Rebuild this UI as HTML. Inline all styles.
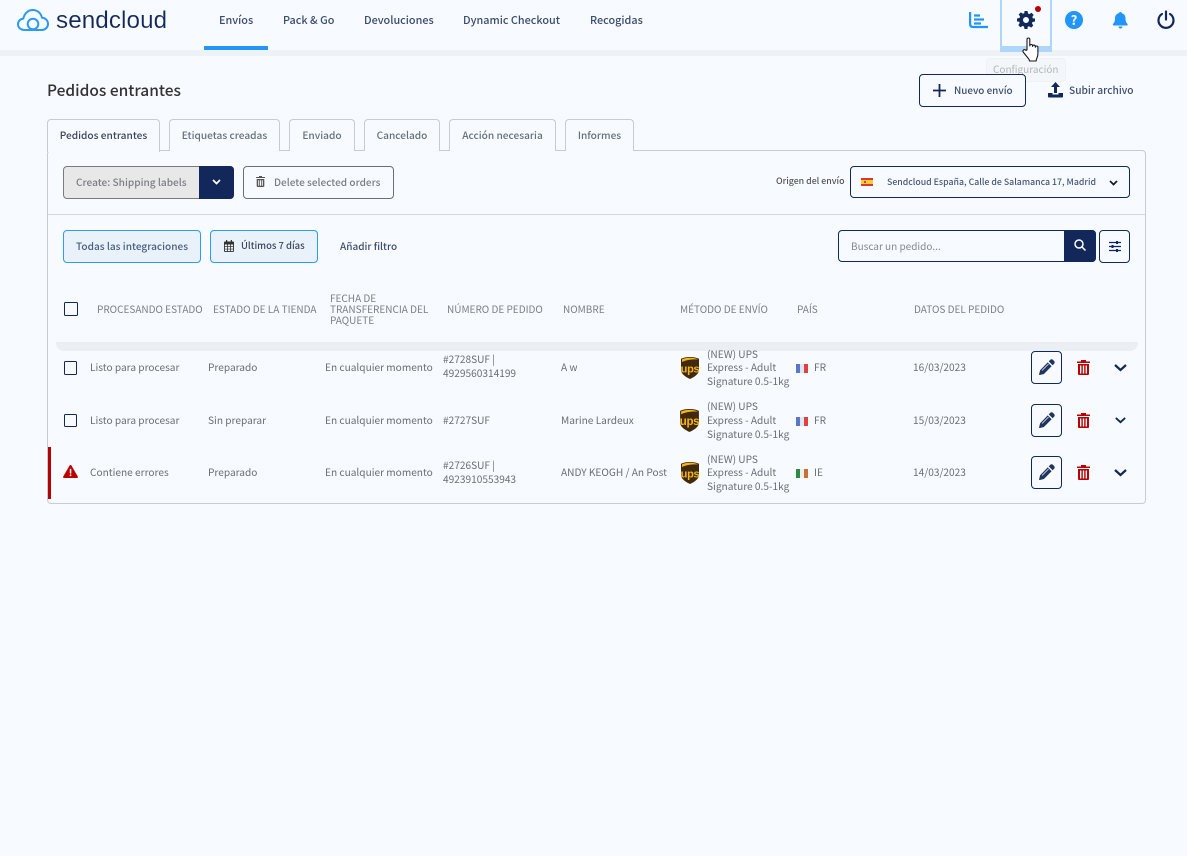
<!DOCTYPE html>
<html lang="es"><head><meta charset="utf-8"><title>Sendcloud</title>
<style>
*{box-sizing:border-box}
html,body{margin:0;padding:0;width:1187px;height:856px;overflow:hidden;background:#f7fbff;font-family:"Noto Sans CJK JP","Liberation Sans",sans-serif;color:#555}
.t{position:absolute;white-space:nowrap;line-height:14px;font-size:11px}
.b{position:absolute;border-radius:4px}
svg{position:absolute;overflow:visible}
.nav{font-size:10.85px;color:#3c4b6c;font-weight:500;top:13px}
.tab{position:absolute;top:119px;height:32px;border:1px solid #c8ccd0;border-bottom:0;border-radius:4px 4px 0 0;font-size:10.15px;font-weight:500;color:#66707c;text-align:center;line-height:30px;background:#f7fbff}
.th{font-size:10px;color:#7b7f85}
.td{font-size:10.15px;color:#6a6d72}
.cb{position:absolute;width:14px;height:14px;border:1.5px solid #12275a;border-radius:1.5px}
.ed{position:absolute;left:1031px;width:31px;height:33px;border:1px solid #12275a;border-radius:4px}
</style></head><body>

<div class="b" style="left:0;top:50px;width:1187px;height:6px;background:#edf2f7;border-radius:0"></div>

<svg style="left:17px;top:9px" width="32" height="23" viewBox="0 0 32 23" fill="none" stroke="#2b9bf4" stroke-width="2"><path d="M10 21H7.500C3.800 21 1 18.600 1 15.200c0-3 2.200-5.300 5.300-5.600C7.200 4.700 11 1 15.800 1c4.600 0 8.200 3.200 9.100 7.600 3.500.2 6.100 3 6.100 6.300 0 3.400-2.700 6.100-6.300 6.100H22"/><circle cx="16" cy="15" r="5.300"/><path d="M10 21h12"/></svg>
<div class="t" style="left:56px;top:6px;font-size:24.200px;line-height:30px;color:#12275a;font-family:'Liberation Sans',sans-serif;letter-spacing:.1px;-webkit-text-stroke:.12px #f7fbff">sendcloud</div>

<div class="t nav" style="left:219px">Envíos</div>
<div class="t nav" style="left:283px">Pack &amp; Go</div>
<div class="t nav" style="left:364px">Devoluciones</div>
<div class="t nav" style="left:463px">Dynamic Checkout</div>
<div class="t nav" style="left:590px">Recogidas</div>
<div class="b" style="left:204px;top:46px;width:64px;height:4px;background:#2196f8;border-radius:0"></div>

<svg style="left:969px;top:12px" width="19" height="16" viewBox="0 0 19 16" fill="none" stroke="#2196f8" stroke-width="2.200"><path d="M1.100 0v12c0 2 1 3 3 3H19"/><path d="M5 3.500h6M5 7.500h10M5 11.500h7"/></svg>

<div class="b" style="left:1000px;top:0;width:52px;height:52px;border:2px solid #aed6fa;border-top:0;border-radius:0"></div>
<div class="b" style="left:1002px;top:46px;width:48px;height:5px;background:#aed6fa;border-radius:0"></div>
<svg style="left:1017px;top:11px" width="18" height="18" viewBox="0 0 24 24"><path fill="#12275a" fill-rule="evenodd" d="M10 0h4l.7 3.300 1.800.8 2.900-1.800 2.800 2.800-1.800 2.900.8 1.800L24 10v4l-3.300.7-.8 1.800 1.800 2.900-2.800 2.800-2.900-1.800-1.800.8L14 24h-4l-.7-3.300-1.800-.8-2.900 1.800-2.800-2.800 1.800-2.900-.8-1.800L0 14v-4l3.300-.7.8-1.800-1.800-2.900 2.800-2.800 2.900 1.800 1.800-.8zM12 8a4 4 0 1 0 0 8 4 4 0 0 0 0-8z"/></svg>
<div class="b" style="left:1035px;top:6px;width:6px;height:6px;border-radius:50%;background:#b80000"></div>

<div class="b" style="left:1065px;top:11px;width:18px;height:18px;border-radius:50%;background:#2196f8"></div>
<div class="t" style="left:1065px;top:12px;width:18px;text-align:center;color:#fff;font-size:13px;line-height:16px;font-weight:700">?</div>

<svg style="left:1113px;top:12px" width="15" height="17" viewBox="0 0 15 17"><path fill="#2196f8" d="M7.500 0c.8 0 1.300.6 1.300 1.300 2.500.6 3.700 2.600 3.700 5 0 3.400.8 4.300 2 5.700.4.500.2 1.500-.7 1.500H.7C-.2 13.500-.4 12.500 0 12c1.200-1.400 2-2.300 2-5.700 0-2.400 1.200-4.400 3.700-5C5.700.6 6.700 0 7.500 0zM5.500 14.500h4c0 1.200-.9 2-2 2s-2-.8-2-2z"/></svg>

<svg style="left:1157px;top:10px" width="18" height="19" viewBox="0 0 18 19" fill="none" stroke="#12275a" stroke-width="2.200" stroke-linecap="round"><path d="M9 1.500v8"/><path d="M5 4A7.500 7.500 0 1 0 13 4"/></svg>

<div class="t" style="left:47px;top:79px;font-size:15.500px;line-height:22px;font-weight:500;color:#333">Pedidos entrantes</div>

<div class="b" style="left:986px;top:58px;width:80px;height:24px;background:#f4f7fa;border:1px solid #eef1f4;opacity:.9"></div>
<div class="t" style="left:993px;top:62px;font-size:10px;color:#b4b7ba">Configuración</div>

<div class="b" style="left:919px;top:74px;width:107px;height:33px;border:1px solid #12275a;background:#f7fbff"></div>
<svg style="left:933px;top:84px" width="13" height="13" viewBox="0 0 13 13" stroke="#12275a" stroke-width="1.800"><path d="M6.500 0v13M0 6.500h13"/></svg>
<div class="t" style="left:954px;top:83px;font-size:9.900px;font-weight:500;color:#3f4d6e">Nuevo envío</div>

<svg style="left:1048px;top:82px" width="15" height="17" viewBox="0 0 15 17"><path fill="#12275a" d="M7.500 0l4.500 5H9v6H6V5H3zM0 11h4.500v1.500h6V11H15v3.500c0 .6-.4 1-1 1H1c-.6 0-1-.4-1-1z"/></svg>
<div class="t" style="left:1069px;top:83px;font-size:10.200px;font-weight:500;color:#3f4d6e">Subir archivo</div>

<div class="b" style="left:47px;top:150px;width:1099px;height:354px;border:1px solid #c8ccd0;background:#f7fbff"></div>

<div class="tab" style="left:47px;width:113px;height:33px;color:#3c4458;border-color:#c8ccd0;z-index:2">Pedidos entrantes</div>
<div class="tab" style="left:169px;width:111px">Etiquetas creadas</div>
<div class="tab" style="left:289px;width:66px">Enviado</div>
<div class="tab" style="left:364px;width:76px">Cancelado</div>
<div class="tab" style="left:449px;width:107px">Acción necesaria</div>
<div class="tab" style="left:565px;width:69px">Informes</div>

<div class="b" style="left:63px;top:166px;width:171px;height:33px;background:#e8e8e9;border:1px solid #7a7a7a"></div>
<div class="b" style="left:199px;top:166px;width:35px;height:33px;background:#12275a;border-radius:0 4px 4px 0"></div>
<div class="t" style="left:76px;top:175px;font-size:10.100px;font-weight:500;color:#7a7d82">Create: Shipping labels</div>
<svg style="left:212px;top:179px" width="9" height="6" viewBox="0 0 9 6" fill="none" stroke="#fff" stroke-width="1.700"><path d="M1 1l3.500 3.500L8 1"/></svg>

<div class="b" style="left:243px;top:166px;width:151px;height:33px;border:1px solid #6e6e6e"></div>
<svg style="left:256px;top:176px" width="9" height="11" viewBox="0 0 9 11" fill="#555"><path d="M0 1h3V0h3v1h3v1H0zM.7 3h7.600v7c0 .6-.4 1-1 1H1.700c-.6 0-1-.4-1-1zM2.200 4.200v5.600h1V4.200zm1.800 0v5.600h1V4.200zm1.800 0v5.600h1V4.200z"/></svg>
<div class="t" style="left:274px;top:175px;font-size:10.050px;font-weight:500;color:#7a7d82">Delete selected orders</div>

<div class="t" style="left:776px;top:174px;font-size:8.800px;font-weight:500;color:#555">Origen del envío</div>
<div class="b" style="left:850px;top:166px;width:280px;height:32px;border:1px solid #12275a"></div>
<svg style="left:861px;top:178px" width="12" height="8" viewBox="0 0 12 8"><rect width="12" height="8" fill="#d9363a"/><rect y="2" width="12" height="4" fill="#f6cd2e"/><rect x="3" y="3" width="2" height="2" fill="#c4464a"/></svg>
<div class="t" style="left:887px;top:175px;font-size:8.750px;font-weight:500;color:#4a5878">Sendcloud España, Calle de Salamanca 17, Madrid</div>
<svg style="left:1109px;top:180px" width="9" height="6" viewBox="0 0 9 6" fill="none" stroke="#1a1a1a" stroke-width="1.700"><path d="M1 1l3.500 3.500L8 1"/></svg>

<div class="b" style="left:48px;top:214px;width:1097px;height:1px;background:#d4d8dc;border-radius:0"></div>

<div class="b" style="left:63px;top:230px;width:138px;height:33px;border:1px solid #2b9bf4;background:#e9f2fa"></div>
<div class="t" style="left:76px;top:239px;font-size:10.100px;font-weight:500;color:#4a5d80">Todas las integraciones</div>
<div class="b" style="left:210px;top:230px;width:108px;height:33px;border:1px solid #2b9bf4;background:#e9f2fa"></div>
<svg style="left:224px;top:240px" width="10" height="12" viewBox="0 0 10 12" fill="#333"><path d="M2 0h1.200v1.500h3.600V0H8v1.500h1c.6 0 1 .4 1 1V11c0 .6-.4 1-1 1H1c-.6 0-1-.4-1-1V2.500c0-.6.4-1 1-1h1zM.9 4.500v1.700h2.200V4.500zm3 0v1.700h2.200V4.500zm3 0v1.700h2.200V4.500zM.9 7v1.700h2.200V7zm3 0v1.700h2.200V7zm3 0v1.700h2.200V7zM.9 9.400v1.700h2.200V9.400zm3 0v1.700h2.200V9.400zm3 0v1.700h2.200V9.400z"/></svg>
<div class="t" style="left:241px;top:238px;font-size:9.450px;font-weight:500;color:#3c4458">Últimos 7 días</div>
<div class="t" style="left:340px;top:239px;font-size:10px;font-weight:500;color:#3f4d6e">Añadir filtro</div>

<div class="b" style="left:838px;top:230px;width:258px;height:32px;border:1px solid #12275a"></div>
<div class="b" style="left:1064px;top:230px;width:32px;height:32px;background:#12275a;border-radius:0 4px 4px 0"></div>
<div class="t" style="left:851px;top:239px;font-size:10px;color:#85888d">Buscar un pedido...</div>
<svg style="left:1074px;top:239px" width="12" height="12" viewBox="0 0 12 12" fill="none" stroke="#fff" stroke-width="1.500"><circle cx="5" cy="5" r="4"/><path d="M8 8l3.500 3.500"/></svg>
<div class="b" style="left:1099px;top:230px;width:31px;height:33px;border:1px solid #12275a"></div>
<svg style="left:1109px;top:241px" width="12" height="11" viewBox="0 0 12 11" stroke="#12275a" stroke-width="1.200"><path d="M0 1.500h12M0 5.500h12M0 9.500h12"/><path stroke-width="2" d="M8 0v3M3.500 4v3M8 8v3"/></svg>

<div class="cb" style="left:64px;top:302px"></div>
<div class="t th" style="left:97px;top:302px">PROCESANDO ESTADO</div>
<div class="t th" style="left:213px;top:302px">ESTADO DE LA TIENDA</div>
<div class="t th" style="left:330px;top:292px;line-height:11.200px">FECHA DE<br>TRANSFERENCIA DEL<br>PAQUETE</div>
<div class="t th" style="left:447px;top:302px">NÚMERO DE PEDIDO</div>
<div class="t th" style="left:563px;top:302px">NOMBRE</div>
<div class="t th" style="left:680px;top:302px">MÉTODO DE ENVÍO</div>
<div class="t th" style="left:797px;top:302px">PAÍS</div>
<div class="t th" style="left:914px;top:302px">DATOS DEL PEDIDO</div>

<div class="b" style="left:56px;top:342px;width:1082px;height:9px;background:#ebeef2;border-radius:0 0 8px 8px"></div>

<!-- Row 1 -->
<div class="cb" style="left:64px;top:361px;height:14px;width:13px"></div>
<div class="t td" style="left:90px;top:360px">Listo para procesar</div>
<div class="t td" style="left:208px;top:360px">Preparado</div>
<div class="t td" style="left:325px;top:360px">En cualquier momento</div>
<div class="t td" style="left:443px;top:352px;line-height:13.500px">#2728SUF |<br>4929560314199</div>
<div class="t td" style="left:561px;top:360px">A w</div>
<svg style="left:681px;top:357px" width="18" height="22" viewBox="0 0 18 22"><path fill="#3f2a10" d="M9 0c3.300 0 6.300.5 9 1.800v10.700c0 4.200-3.300 6.800-9 9.500-5.700-2.700-9-5.300-9-9.500V1.800C2.700.5 5.700 0 9 0z"/><path fill="#f9b415" d="M9 .8C6 .8 3.400 1.300 1 2.400v2.600C5 2.900 11 2.100 17 2.400C14.600 1.300 12 .8 9 .8z"/><text x="9" y="15.500" text-anchor="middle" font-size="11" font-weight="700" letter-spacing="-.3" fill="#f9b415" font-family="Liberation Sans,sans-serif">ups</text></svg>
<div class="t td" style="left:707px;top:346.500px;line-height:13.700px">(NEW) UPS<br>Express - Adult<br>Signature 0.5-1kg</div>
<svg style="left:796px;top:364px" width="12" height="9" viewBox="0 0 12 9"><rect width="4" height="9" fill="#5a78c8"/><rect x="4" width="4" height="9" fill="#dfe6f4"/><rect x="8" width="4" height="9" fill="#e04040"/></svg>
<div class="t td" style="left:814px;top:360px">FR</div>
<div class="t td" style="left:913px;top:360px">16/03/2023</div>
<div class="ed" style="top:351px"></div>
<svg style="left:1039px;top:359px" width="16" height="16" viewBox="0 0 16 16" fill="#20365f"><path d="M11.200.9c.8-.8 2-.8 2.800 0l1.100 1.100c.8.8.8 2 0 2.800L13.600 6.300 9.700 2.400zM8.700 3.400l3.900 3.900-7.700 7.700-4 1c-.5.100-.9-.3-.8-.8l1-4z"/><path d="M3 11.500l6.500-6.500" stroke="#f7fbff" stroke-width=".7"/></svg>
<svg style="left:1077px;top:360px" width="13" height="15" viewBox="0 0 13 15" fill="#b80000"><path d="M0 1.500h4V0h5v1.500h4V3H0zM1 4h11v10c0 .6-.4 1-1 1H2c-.6 0-1-.4-1-1zm2 1.500v8h1.400v-8zm2.800 0v8h1.400v-8zm2.800 0v8H10v-8z"/></svg>
<svg style="left:1114px;top:364px" width="13" height="8" viewBox="0 0 13 8" fill="none" stroke="#12275a" stroke-width="2.200"><path d="M1 1l5.500 5L12 1"/></svg>

<!-- Row 2 -->
<div class="cb" style="left:64px;top:414px;height:13px;width:13px"></div>
<div class="t td" style="left:90px;top:413px">Listo para procesar</div>
<div class="t td" style="left:208px;top:413px">Sin preparar</div>
<div class="t td" style="left:325px;top:413px">En cualquier momento</div>
<div class="t td" style="left:443px;top:413px">#2727SUF</div>
<div class="t td" style="left:561px;top:413px">Marine Lardeux</div>
<svg style="left:680px;top:409px" width="19" height="23" viewBox="0 0 18 22"><path fill="#3f2a10" d="M9 0c3.300 0 6.300.5 9 1.800v10.700c0 4.200-3.300 6.800-9 9.500-5.700-2.700-9-5.300-9-9.500V1.800C2.700.5 5.700 0 9 0z"/><path fill="#f9b415" d="M9 .8C6 .8 3.400 1.300 1 2.400v2.600C5 2.900 11 2.100 17 2.400C14.600 1.300 12 .8 9 .8z"/><text x="9" y="15.500" text-anchor="middle" font-size="11" font-weight="700" letter-spacing="-.3" fill="#f9b415" font-family="Liberation Sans,sans-serif">ups</text></svg>
<div class="t td" style="left:707px;top:399px;line-height:14px">(NEW) UPS<br>Express - Adult<br>Signature 0.5-1kg</div>
<svg style="left:796px;top:417px" width="12" height="9" viewBox="0 0 12 9"><rect width="4" height="9" fill="#5a78c8"/><rect x="4" width="4" height="9" fill="#dfe6f4"/><rect x="8" width="4" height="9" fill="#e04040"/></svg>
<div class="t td" style="left:814px;top:413px">FR</div>
<div class="t td" style="left:913px;top:413px">15/03/2023</div>
<div class="ed" style="top:404px"></div>
<svg style="left:1039px;top:412px" width="16" height="16" viewBox="0 0 16 16" fill="#20365f"><path d="M11.200.9c.8-.8 2-.8 2.800 0l1.100 1.100c.8.8.8 2 0 2.800L13.600 6.300 9.700 2.400zM8.700 3.400l3.900 3.900-7.700 7.700-4 1c-.5.100-.9-.3-.8-.8l1-4z"/><path d="M3 11.500l6.500-6.500" stroke="#f7fbff" stroke-width=".7"/></svg>
<svg style="left:1077px;top:413px" width="13" height="15" viewBox="0 0 13 15" fill="#b80000"><path d="M0 1.500h4V0h5v1.500h4V3H0zM1 4h11v10c0 .6-.4 1-1 1H2c-.6 0-1-.4-1-1zm2 1.500v8h1.400v-8zm2.800 0v8h1.400v-8zm2.800 0v8H10v-8z"/></svg>
<svg style="left:1115px;top:417px" width="11" height="7" viewBox="0 0 13 8" fill="none" stroke="#12275a" stroke-width="2.200"><path d="M1 1l5.500 5L12 1"/></svg>

<!-- Row 3 -->
<div class="b" style="left:48px;top:447px;width:3px;height:52px;background:#b80000;border-radius:0"></div>
<svg style="left:63px;top:465px" width="15" height="13" viewBox="0 0 15 13"><path fill="#b80000" d="M7.500 0c.4 0 .7.200.9.500l6.400 11c.4.700-.1 1.500-.9 1.500H1.100C.3 13-.2 12.200.2 11.500L6.600.5C6.800.2 7.100 0 7.500 0z"/><rect x="6.800" y="3.800" width="1.500" height="4.800" fill="#fff"/><rect x="6.800" y="9.500" width="1.500" height="1.600" fill="#fff"/></svg>
<div class="t td" style="left:90px;top:465px">Contiene errores</div>
<div class="t td" style="left:208px;top:465px">Preparado</div>
<div class="t td" style="left:325px;top:465px">En cualquier momento</div>
<div class="t td" style="left:443px;top:458px;line-height:13.500px">#2726SUF |<br>4923910553943</div>
<div class="t td" style="left:561px;top:465px">ANDY KEOGH / An Post</div>
<svg style="left:681px;top:462px" width="18" height="22" viewBox="0 0 18 22"><path fill="#3f2a10" d="M9 0c3.300 0 6.300.5 9 1.800v10.700c0 4.200-3.300 6.800-9 9.500-5.700-2.700-9-5.300-9-9.500V1.800C2.700.5 5.700 0 9 0z"/><path fill="#f9b415" d="M9 .8C6 .8 3.400 1.300 1 2.400v2.600C5 2.900 11 2.100 17 2.400C14.600 1.300 12 .8 9 .8z"/><text x="9" y="15.500" text-anchor="middle" font-size="11" font-weight="700" letter-spacing="-.3" fill="#f9b415" font-family="Liberation Sans,sans-serif">ups</text></svg>
<div class="t td" style="left:707px;top:451.500px;line-height:13.700px">(NEW) UPS<br>Express - Adult<br>Signature 0.5-1kg</div>
<svg style="left:796px;top:469px" width="12" height="9" viewBox="0 0 12 9"><rect width="4" height="9" fill="#2e8b45"/><rect x="4" width="4" height="9" fill="#eef0ee"/><rect x="8" width="4" height="9" fill="#c9703a"/></svg>
<div class="t td" style="left:814px;top:465px">IE</div>
<div class="t td" style="left:913px;top:465px">14/03/2023</div>
<div class="ed" style="top:456px"></div>
<svg style="left:1039px;top:464px" width="16" height="16" viewBox="0 0 16 16" fill="#20365f"><path d="M11.200.9c.8-.8 2-.8 2.800 0l1.100 1.100c.8.8.8 2 0 2.800L13.600 6.300 9.700 2.400zM8.700 3.400l3.900 3.900-7.700 7.700-4 1c-.5.100-.9-.3-.8-.8l1-4z"/><path d="M3 11.500l6.500-6.500" stroke="#f7fbff" stroke-width=".7"/></svg>
<svg style="left:1077px;top:465px" width="13" height="15" viewBox="0 0 13 15" fill="#b80000"><path d="M0 1.500h4V0h5v1.500h4V3H0zM1 4h11v10c0 .6-.4 1-1 1H2c-.6 0-1-.4-1-1zm2 1.500v8h1.400v-8zm2.800 0v8h1.400v-8zm2.800 0v8H10v-8z"/></svg>
<svg style="left:1114px;top:469px" width="13" height="8" viewBox="0 0 13 8" fill="none" stroke="#12275a" stroke-width="2.200"><path d="M1 1l5.500 5L12 1"/></svg>

<!-- Cursor -->
<svg style="left:1022px;top:37px;z-index:5" width="20" height="25" viewBox="0 0 20 25"><path fill="#fff" stroke="#1a1a1a" stroke-width="1.100" stroke-linejoin="round" d="M5 13V2.500C5 1.500 5.600 1 6.400 1s1.400.5 1.400 1.500V9c0-1 .6-1.500 1.400-1.500S10.600 8 10.600 9v.5c0-1 .6-1.400 1.300-1.400s1.400.5 1.400 1.400v.8c0-.9.6-1.300 1.300-1.300s1.300.5 1.300 1.400v6.400c0 2.500-.5 3.500-1.200 4.700-.4.800-.5 1.500-.5 2.500H7.500c0-1.500-1-2.300-2-3.600L1.500 15.500c-.8-1-.7-2 0-2.600.8-.6 1.800-.2 2.400.5z"/></svg>
</body></html>
